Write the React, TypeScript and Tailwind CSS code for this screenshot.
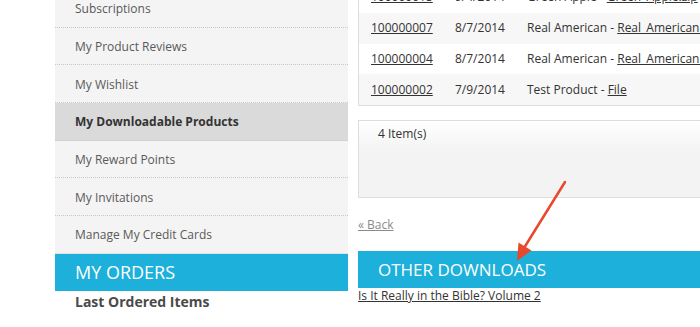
import React from 'react';

const menu = [
  { label: 'Subscriptions' },
  { label: 'My Product Reviews' },
  { label: 'My Wishlist' },
  { label: 'My Downloadable Products', active: true },
  { label: 'My Reward Points' },
  { label: 'My Invitations' },
  { label: 'Manage My Credit Cards', last: true },
];

const rows = [
  { id: '100000015', date: '9/4/2014', title: 'Green Apple', file: 'Green_Apple.zip', shade: false },
  { id: '100000007', date: '8/7/2014', title: 'Real American', file: 'Real_American.zip', shade: true },
  { id: '100000004', date: '8/7/2014', title: 'Real American', file: 'Real_American.zip', shade: false },
  { id: '100000002', date: '7/9/2014', title: 'Test Product', file: 'File', shade: true },
];

const Sidebar = () => (
  <div className="w-[293px] shrink-0 -mt-[10px] flex flex-col">
    {menu.map((item) => (
      <div
        key={item.label}
        className={`h-[37.7px] flex items-center pl-[20px] pt-[2px] text-[12px] ${
          item.active ? 'bg-[#dadada] font-bold text-[#333]' : 'bg-[#f4f4f4] text-[#5a5a5a]'
        } ${item.last ? 'border-b border-[#e2e2e2]' : 'border-b border-dotted border-[#c8c8c8]'}`}
      >
        {item.label}
      </div>
    ))}
    <div className="h-[37px] bg-[#1cb0da] flex items-center pl-[20px] text-[18px] font-medium text-white">MY ORDERS</div>
    <div className="pl-[20px] pt-[1px] text-[14px] leading-[20px] font-bold text-[#4a4a4a]">Last Ordered Items</div>
  </div>
);

const Content = () => (
  <div className="w-[360px] shrink-0 -mt-[19px] flex flex-col">
    <div className="border border-[#dddddd]">
      {rows.map((r) => (
        <div
          key={r.id + r.date}
          className={`h-[30.75px] flex items-center text-[12px] text-[#333] whitespace-nowrap ${r.shade ? 'bg-[#f7f7f7]' : 'bg-white'}`}
        >
          <span className="shrink-0 pl-[12px] w-[96px]">
            <span className="underline">{r.id}</span>
          </span>
          <span className="shrink-0 w-[72px]">{r.date}</span>
          <span className="shrink-0">
            {r.title} - <span className="underline">{r.file}</span>
          </span>
        </div>
      ))}
    </div>
    <div className="mt-[14px] h-[78px] border border-[#dddddd] bg-linear-to-b from-white to-[#f3f3f3] to-40% pl-[19px] pt-[5px] text-[12px] leading-[16px] text-[#333]">
      4 Item(s)
    </div>
    <div className="mt-[19px] text-[12px] leading-[16px] text-[#8a8a8a] underline">« Back</div>
    <div className="mt-[18px] h-[37px] bg-[#1cb0da] flex items-center pl-[20px] text-[17px] font-medium text-white">OTHER DOWNLOADS</div>
    <div className="text-[12px] leading-[16px] text-[#333] underline whitespace-nowrap">Is It Really in the Bible? Volume 2</div>
  </div>
);

const Arrow = () => (
  <svg className="absolute left-0 top-0 pointer-events-none" width="700" height="327">
    <line x1="565" y1="182" x2="524" y2="248" stroke="#e8482e" strokeWidth="2.5" strokeLinecap="round" />
    <polygon points="517,261 531.5,250.5 518.5,242.5" fill="#e8482e" />
  </svg>
);

export default function App() {
  return (
    <div
      className="relative w-[700px] h-[327px] overflow-hidden bg-white"
      style={{ fontFamily: '"Open Sans", "Liberation Sans", sans-serif' }}
    >
      <div className="flex gap-[10px] pl-[55px]">
        <Sidebar />
        <Content />
      </div>
      <Arrow />
    </div>
  );
}
